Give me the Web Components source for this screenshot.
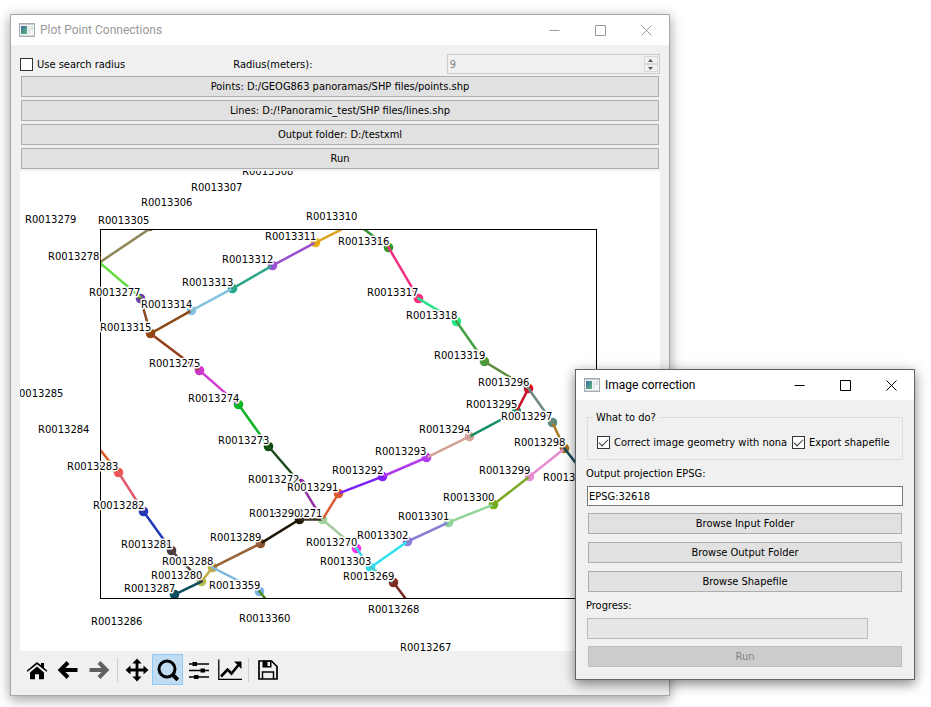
<!DOCTYPE html>
<html lang="en">
<head>
<meta charset="utf-8">
<title>Plot Point Connections</title>
<style>
  html, body { margin: 0; background: #fff; }
</style>
</head>
<body>
<desk-top></desk-top>

<template id="t-window">
  <style>
    :host { display: block; box-sizing: border-box; border: 1px solid var(--edge, #a8a8a8); background: #f0f0f0; color: #000;
      box-shadow: 0 4px 11px rgba(0,0,0,var(--shade, .3)), 0 1px 15px rgba(0,0,0,.1);
      font: 11px/14px "DejaVu Sans Condensed", "DejaVu Sans", sans-serif; }
    header { display: flex; align-items: center; height: 30px; background: #fff; color: var(--ink, #999); }
    .app { width: 16px; height: 14px; margin: 0 5px 0 8px; flex: none; }
    h1 { flex: 1; margin: 0; font: 12px/16px Roboto, "Open Sans", sans-serif; }
    header button { width: 46px; height: 30px; padding: 0; border: 0; background: none; color: inherit; display: grid; place-items: center; }
    header button svg { width: 11px; height: 11px; fill: none; stroke: currentColor; }
  </style>
  <header>
    <svg class="app" viewBox="0 0 16 14" aria-hidden="true">
      <defs><linearGradient id="g" x2="1" y2="1"><stop offset="0" stop-color="#3d6f9e"/><stop offset="1" stop-color="#5fb583"/></linearGradient></defs>
      <rect x=".5" y=".5" width="15" height="13" fill="#f6f6f6" stroke="#a5adb2"/>
      <path d="M1 1.5h14" stroke="#c9d0d4"/>
      <rect x="2" y="3" width="6" height="8" fill="url(#g)"/>
      <rect x="9" y="3" width="2" height="8" fill="#dfe5e5"/><rect x="12" y="3" width="2" height="4" fill="#cfe0dc"/>
      <path d="M1 12.5h14" stroke="#d5d9db"/>
    </svg>
    <h1></h1>
    <button aria-label="Minimize"><svg viewBox="0 0 11 11"><path d="M.5 5.5h10"/></svg></button>
    <button aria-label="Maximize"><svg viewBox="0 0 11 11"><path d="M.5.5h10v10H.5z"/></svg></button>
    <button aria-label="Close"><svg viewBox="0 0 11 11"><path d="M.5.5l10 10M10.5.5l-10 10"/></svg></button>
  </header>
  <slot></slot>
</template>

<template id="t-push">
  <style>
    :host { display: block; padding: 0 1px; }
    button { display: block; box-sizing: border-box; width: 100%; height: 21px; padding: 0; border: 1px solid #adadad; background: #e1e1e1; color: #000; font: inherit; line-height: 19px; }
    button:disabled { background: #ccc; border-color: #bfbfbf; color: #838383; }
  </style>
  <button type="button"><slot></slot></button>
</template>

<template id="t-check">
  <style>
    :host { display: block; }
    label { display: flex; align-items: center; gap: 4px; white-space: nowrap; }
    span { padding-top: 2px; }
    input { appearance: none; box-sizing: border-box; width: 13px; height: 13px; margin: 0; border: 1px solid #333; background: #fff; flex: none; display: grid; place-items: center; }
    input:checked::before { content: ""; width: 9px; height: 5px; box-sizing: border-box; border: solid #333; border-width: 0 0 1px 1px; transform: translateY(-1px) rotate(-45deg); }
  </style>
  <label><input type="checkbox"><span><slot></slot></span></label>
</template>

<template id="t-radius">
  <style>
    :host { display: grid; grid-template-columns: 1fr 1fr 1fr; align-items: center; }
    :host > label { padding-top: 2px; }
    .box { display: flex; align-items: center; box-sizing: border-box; height: 20px; border: 1px solid #ccc; padding-right: 1px; }
    input { flex: 1; min-width: 0; border: 0; padding: 2px 2px 0; background: none; color: #838383; font: inherit; appearance: textfield; }
    input::-webkit-inner-spin-button { display: none; }
    .name { padding-top: 2px; }
    .spin { display: grid; width: 14px; }
    button { height: 8px; box-sizing: border-box; padding: 0; border: 1px solid #d9d9d9; background: #f0f0f0; display: grid; place-items: center; }
    svg { width: 5px; height: 3px; fill: #555; display: block; }
  </style>
  <check-field>Use search radius</check-field>
  <label class="name" for="r">Radius(meters):</label>
  <div class="box"><input id="r" type="number" value="9" disabled>
    <div class="spin">
      <button disabled aria-label="Increase"><svg viewBox="0 0 5 3"><path d="M0 3L2.500 0L5 3z"/></svg></button>
      <button disabled aria-label="Decrease"><svg viewBox="0 0 5 3"><path d="M0 0L2.500 3L5 0z"/></svg></button>
    </div>
  </div>
</template>

<template id="t-tools">
  <style>
    :host { display: flex; align-items: center; padding: 0 1px; }
    button { width: 31px; height: 31px; box-sizing: border-box; padding: 0; border: 1px solid transparent; background: none; display: grid; place-items: center; }
    button[aria-pressed=true] { background: #bfdcf3; border-color: #90c8f6; }
    button:disabled { opacity: .6; }
    i { width: 1px; height: 24px; margin: 0 3px; background: #cdcdcd; }
    svg { width: 24px; height: 24px; display: block; }
  </style>
  <button aria-label="Home"><svg viewBox="0 0 24 24"><path d="M12 8.500L5 14.500V20.500q0 .7.700.7H10v-5h4v5h4.300q.700 0 .7-.7V14.500z"/><path d="M12 4.300q.600 0 1 .4L16 7.200V5h3v4.800l3.400 2.900-.9 1.100L12 6.200 2.500 13.800l-.9-1.100L11 4.700q.400-.4 1-.4z"/></svg></button>
  <button aria-label="Back"><svg viewBox="0 0 24 24"><path d="M12 4.500L4.500 12l7.500 7.500M5 12h16.500" fill="none" stroke="#000" stroke-width="4"/></svg></button>
  <button aria-label="Forward" disabled><svg viewBox="0 0 24 24"><path d="M12 4.500L19.500 12 12 19.500M19 12H2.500" fill="none" stroke="#000" stroke-width="4"/></svg></button>
  <i></i>
  <button aria-label="Pan"><svg viewBox="0 0 24 24"><path d="M12 .5l4.600 5H13.400v5.100h5.100V7.400l5 4.600-5 4.600v-3.200h-5.100v5.100h3.200L12 23.500l-4.600-5h3.200v-5.100H5.500v3.200L.5 12l5-4.600v3.200h5.100V5.500H7.400z"/></svg></button>
  <button aria-label="Zoom" aria-pressed="true"><svg viewBox="0 0 24 24"><circle cx="11" cy="11" r="8" fill="none" stroke="#000" stroke-width="3"/><path d="M16.500 16.500l5.300 5.300" stroke="#000" stroke-width="4"/></svg></button>
  <button aria-label="Configure subplots"><svg viewBox="0 0 24 24"><path d="M2 6h20M2 12.500h20M2 19h20" stroke="#000" stroke-width="1.400"/><path d="M5.500 4h4.500v4H5.500zM13.500 10.500h4.500v4h-4.500zM7 17h4.500v4H7z"/></svg></button>
  <button aria-label="Edit axes"><svg viewBox="0 0 24 24"><path d="M.8 1.500V21.300H24" fill="none" stroke="#000" stroke-width="1.300"/><path d="M3 18.500l6.500-7 4 4L20.500 7" fill="none" stroke="#000" stroke-width="2.600"/><path d="M16 3.500H23.500V11z"/></svg></button>
  <i></i>
  <button aria-label="Save"><svg viewBox="0 0 24 24"><path d="M3 3h12.500L21 8.500V21H3z" fill="none" stroke="#000" stroke-width="1.700"/><path d="M6.500 2.500h9v7h-9z"/><path d="M11.500 4h2.500v4h-2.500z" fill="#f0f0f0"/><path d="M6.500 21v-7h11v7" fill="none" stroke="#000" stroke-width="1.500"/></svg></button>
</template>

<template id="t-dialog">
  <style>
    :host { display: flex; flex-direction: column; padding: 9px 11px 12px; }
    fieldset { margin: 0; padding: 9px 9px; border: 1px solid #dcdcdc; display: flex; gap: 5px; min-width: 0; }
    legend { padding: 2px 3px 0; margin-left: -4px; }
    .l1 { margin: 7px 0 5px -1px; }
    .l2 { margin: 7px 0 5px -1px; }
    input { display: block; box-sizing: border-box; width: 100%; height: 20px; border: 1px solid #7a7a7a; padding: 0 1px; background: #fff; color: #000; font: inherit; }
    .list { display: grid; gap: 8px; margin-top: 7px; }
    .bar { display: block; height: 21px; margin-right: 35px; margin-bottom: 7px; box-sizing: border-box; border: 1px solid #bcbcbc; background: #e6e6e6; }
  </style>
  <fieldset><legend>What to do?</legend>
    <check-field checked>Correct image geometry with nona</check-field>
    <check-field checked>Export shapefile</check-field>
  </fieldset>
  <label class="l1" for="epsg">Output projection EPSG:</label>
  <input id="epsg" type="text" value="EPSG:32618">
  <div class="list">
    <push-button>Browse Input Folder</push-button>
    <push-button>Browse Output Folder</push-button>
    <push-button>Browse Shapefile</push-button>
  </div>
  <label class="l2" id="pl">Progress:</label>
  <div class="bar" role="progressbar" aria-labelledby="pl" aria-valuenow="0"></div>
  <push-button disabled>Run</push-button>
</template>

<template id="t-desk">
  <style>
    :host { display: block; position: relative; overflow: hidden; min-height: 100vh; }
    .main { margin: 14px 261px 11px 10px; }
    .tool { position: absolute; top: 369px; right: 16px; width: 340px; --edge: #5f6365; --ink: #000; --shade: .42; }
    .body { padding: 9px 9px 10px; }
    .list { display: grid; gap: 3px; margin: 2px 0; }
    tool-strip { margin-top: 3px; }
  </style>
  <app-window class="main" heading="Plot Point Connections">
    <div class="body">
      <radius-row></radius-row>
      <div class="list">
        <push-button>Points: D:/GEOG863 panoramas/SHP files/points.shp</push-button>
        <push-button>Lines: D:/!Panoramic_test/SHP files/lines.shp</push-button>
        <push-button>Output folder: D:/testxml</push-button>
        <push-button>Run</push-button>
      </div>
      <route-plot></route-plot>
      <tool-strip></tool-strip>
    </div>
  </app-window>
  <app-window class="tool" heading="Image correction"><correction-form></correction-form></app-window>
</template>

<script>
class Base extends HTMLElement {
  connectedCallback() {
    if (this.shadowRoot) return;
    const root = this.attachShadow({ mode: 'open' });
    root.append(document.getElementById(this.constructor.tpl).content.cloneNode(true));
    this.ready(root);
  }
  ready() {}
}
customElements.define('push-button', class extends Base {
  static tpl = 't-push';
  ready(root) { root.querySelector('button').disabled = this.hasAttribute('disabled'); }
});
customElements.define('check-field', class extends Base {
  static tpl = 't-check';
  ready(root) { root.querySelector('input').checked = this.hasAttribute('checked'); }
});
customElements.define('radius-row', class extends Base { static tpl = 't-radius'; });
customElements.define('tool-strip', class extends Base { static tpl = 't-tools'; });
customElements.define('correction-form', class extends Base { static tpl = 't-dialog'; });
customElements.define('app-window', class extends Base {
  static tpl = 't-window';
  ready(root) { root.querySelector('h1').textContent = this.getAttribute('heading'); }
});

// Route segments: x1, y1, x2, y2, colour
const LINES = [
  [151,227,99,262,'#8f8656'],[99,262,140,297,'#66dc44'],[140,298,150,333,'#8a4a22'],[199,370,150,333,'#943f1c'],
  [150,333,191,310,'#8b4a14'],[191,310,232,288,'#85c1df'],[232,288,272,265,'#2fa587'],[272,265,315,242,'#9b50d0'],
  [315,242,357,221,'#dca41c'],[356,223,388,247,'#369333'],[388,247,418,298,'#ee3080'],[418,298,456,321,'#25e386'],
  [456,321,484,361,'#44a044'],[484,361,528,388,'#5a8c3c'],[528,388,516,411,'#c81228'],[516,411,469,436,'#149060'],
  [469,436,426,457,'#d2a096'],[426,457,382,476,'#b03cec'],[382,476,338,493,'#7c22f6'],[338,493,322,519,'#d85c34'],
  [322,519,299,519,'#3a3020'],[299,519,260,543,'#1f1708'],[260,543,212,567,'#986438'],[212,567,201,581,'#bcae44'],
  [201,581,174,594,'#105060'],[212,567,259,591,'#7cb8e0'],[259,591,268,602,'#4a8a20'],
  [96,445,118,472,'#d85a20'],[118,472,143,511,'#e05868'],[143,511,171,550,'#2038b8'],[171,550,201,581,'#504440'],
  [199,370,238,404,'#cf3ccf'],[238,404,268,446,'#10b42a'],[268,446,300,483,'#1d4a1d'],[300,483,322,519,'#9030a0'],
  [322,519,356,548,'#a4cca0'],[356,548,370,567,'#30d8e8'],[370,567,407,541,'#2ee0f0'],[370,567,393,582,'#50c8c8'],
  [393,582,408,602,'#7c2820'],[407,541,448,522,'#8880d0'],[448,522,493,504,'#90d49a'],[493,504,529,476,'#7aa822'],
  [529,476,564,448,'#e68cd0'],[564,448,552,422,'#ac7c28'],[552,422,528,388,'#6c8880'],[564,448,600,494,'#0f4c55']
];
// Stations: x, y, colour
const DOTS = [
  [149,226,'#7c6438'],[97,264,'#66dc44'],[140,298,'#643fa4'],[150,333,'#964818'],[191,310,'#85c1e0'],[232,288,'#28a888'],
  [272,265,'#9b50d8'],[315,242,'#f0ae10'],[388,247,'#309828'],[418,298,'#ff2c84'],[456,321,'#20ee88'],[484,361,'#48a03c'],
  [528,388,'#d80c28'],[516,411,'#109868'],[469,436,'#d6a496'],[426,457,'#b43cf0'],[382,476,'#8020ff'],[338,493,'#e05830'],
  [322,519,'#98d898'],[299,519,'#1f1708'],[260,543,'#905830'],[212,567,'#bcae44'],[201,581,'#b4c050'],[174,594,'#085060'],
  [259,591,'#78b4e4'],[118,472,'#f05458'],[143,511,'#2038b8'],[171,550,'#483c40'],[199,370,'#d034cc'],[238,404,'#08b828'],
  [268,446,'#104c14'],[300,483,'#9030a0'],[356,548,'#ff30f0'],[370,567,'#28dcf0'],[393,582,'#802c20'],[407,541,'#8c80d8'],
  [448,522,'#90d49a'],[493,504,'#70b014'],[529,476,'#e890d8'],[564,448,'#a07020'],[552,422,'#5c8c80']
];
// Station labels: number, left, baseline
const LABELS = [
  [308,242,175],[307,191,191],[306,141,206],[279,25,223],[305,98,224],[310,306,220],[278,48,260],[277,89,296],[314,141,308],
  [315,100,331],[313,182,286],[312,222,263],[311,265,240],[316,338,245],[317,367,296],[318,406,319],[319,434,359],[296,478,386],
  [295,466,408],[297,501,420],[294,419,433],[298,514,446],[293,375,455],[299,479,474],[304,543,481],[300,443,501],[301,398,520],
  [302,357,539],[270,306,546],[303,320,565],[269,343,580],[268,368,613],[267,400,651],[285,12,397],[284,38,433],[283,67,470],
  [282,93,509],[281,121,548],[275,149,367],[274,188,402],[273,218,444],[272,248,483],[291,287,491],[292,332,474],[271,271,517],
  [290,249,517],[289,210,541],[288,162,565],[280,151,579],[287,124,592],[359,209,589],[286,91,625],[360,239,622]
];
customElements.define('route-plot', class extends HTMLElement {
  connectedCallback() {
    const root = this.attachShadow({ mode: 'open' });
    root.innerHTML = `<style>
      :host { display: block; background: #fff; }
      svg { display: block; width: 100%; height: auto; }
      text { font: 10px "DejaVu Sans", sans-serif; fill: #000; stroke: #fff; stroke-width: 3px; stroke-linejoin: round; paint-order: stroke; }
    </style>
    <svg viewBox="20 171 640 480" role="img" aria-label="Point connections">
      <clipPath id="axes"><rect x="100" y="229" width="496" height="370"/></clipPath>
      <g clip-path="url(#axes)"><g transform="translate(.5 .5)">
        ${DOTS.map(([x, y, c]) => `<circle cx="${x}" cy="${y}" r="4.800" fill="${c}"/>`).join('')}
        ${LINES.map(([a, b, c, d, k]) => `<path d="M${a} ${b}L${c} ${d}" stroke="${k}" stroke-width="2.500" stroke-linecap="square"/>`).join('')}
      </g></g>
      <rect x="100.500" y="229.500" width="496" height="369" fill="none" stroke="#000"/>
      ${LABELS.map(([n, x, y]) => `<text x="${x}" y="${y}">R0013${n}</text>`).join('')}
    </svg>`;
  }
});
customElements.define('desk-top', class extends Base { static tpl = 't-desk'; });
</script>
</body>
</html>
